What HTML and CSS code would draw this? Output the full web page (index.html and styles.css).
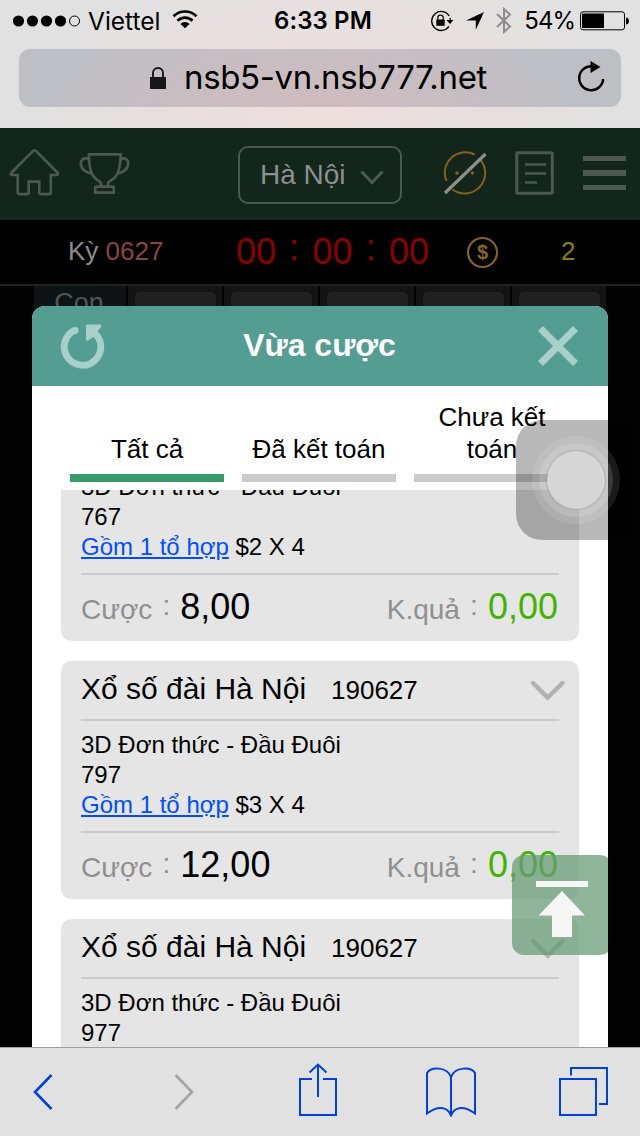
FILE: index.html
```html
<!DOCTYPE html>
<html lang="vi">
<head>
<meta charset="utf-8">
<title>Vừa cược</title>
<link rel="stylesheet" href="styles.css">
</head>
<body>
<div class="screen">
  <header class="chrome">
    <div class="status">
      <div class="status-left">
        <svg class="dots" width="68" height="12" viewBox="0 0 68 12"><circle cx="5.500" cy="6" r="5.600"/><circle cx="19.500" cy="6" r="5.600"/><circle cx="33.500" cy="6" r="5.600"/><circle cx="47.500" cy="6" r="5.600"/><circle cx="61.500" cy="6" r="5" fill="none" stroke="#000"/></svg>
        <span class="carrier">Viettel</span>
        <svg class="wifi" width="26" height="19" viewBox="0 0 26 19"><g fill="none" stroke="#000" stroke-width="2.700"><path d="M1.500 6.300a16.200 16.200 0 0 1 23 0"/><path d="M5.500 10.700a10.500 10.500 0 0 1 15 0"/></g><path d="M13 18.200l-4.600-4.300a6.400 6.400 0 0 1 9.200 0z"/></svg>
      </div>
      <span class="clock">6:33 PM</span>
      <div class="status-right">
        <svg width="24" height="22" viewBox="0 0 24 22"><path d="M19.300 6A9.500 9.500 0 1 0 19 16.400M20.200 8v3" fill="none" stroke="#000" stroke-width="1.300"/><path d="M16.500 10h7l-3.500 4z"/><path d="M6.300 9.500h8.400v6.300H6.300z"/><path d="M7.800 10V7.800a2.700 2.700 0 0 1 5.400 0V10" fill="none" stroke="#000" stroke-width="1.200"/></svg>
        <svg class="arrow" width="18" height="18" viewBox="0 0 18 18"><path d="M18 0L9.800 17.800V8.600H0z"/></svg>
        <svg class="bt" width="16" height="27" viewBox="0 0 16 27"><path d="M1 7l13 12.500-6 5.500V2l6 5.500L1 20" fill="none" stroke="#8d8d8d" stroke-width="2"/></svg>
        <span class="pct">54%</span>
        <svg width="49" height="20" viewBox="0 0 49 20"><rect x=".5" y=".8" width="44" height="18" rx="2.500" fill="none" stroke="#000"/><path d="M2 2.500h22v14.600H2zM46 6.500c4 0 4 7 0 7z"/></svg>
      </div>
    </div>
    <div class="address">
      <svg class="lock" width="16" height="23" viewBox="0 0 16 23"><path d="M0 10h16v12H0z" fill="#171717"/><path d="M3 11V6a5 5 0 0 1 10 0v5" fill="none" stroke="#171717" stroke-width="1.900"/></svg>
      <span class="url">nsb5-vn.nsb777.net</span>
      <svg class="reload" width="28" height="32" viewBox="0 0 28 32"><path d="M15 5.200A12 12 0 1 0 26.200 18" fill="none" stroke="#000" stroke-width="2.500"/><path d="M13.500 0l10 6-10 6z"/></svg>
    </div>
  </header>

  <main class="page">
    <nav class="nav">
      <svg class="home" width="50" height="50" viewBox="0 0 52 52"><path d="M9 28H3.500q-2.500-.4-1-2.300L25 3q1.500-1.300 3 0l22.500 22.700q1.500 1.900-1 2.300H43.500v18q0 2-2 2h-8q-2 0-2-2V35H20.500v11q0 2-2 2H11q-2 0-2-2z"/></svg>
      <svg class="cup" width="51" height="43" viewBox="0 0 52 44"><path d="M10 2.500h32.500c0 13-2 22-9 26q-4 2-4 4.500v2.500h-7V33q0-2.500-4-4.500c-6.500-4-8.500-13-8.500-26zM16.500 41.500V37q0-1.500 1.500-1.500h16q1.500 0 1.500 1.500v4.500zM10 7c-6-1.500-9 1-8 6.500 1 5 6 7.500 10 8.500M42 7c6-1.500 9 1 8 6.500-1 5-6 7.500-10 8.500"/></svg>
      <div class="select"><span>Hà Nội</span><svg width="24" height="15" viewBox="0 0 24 15"><path d="M1.500 1.500L12 12.500l10.500-11"/></svg></div>
      <svg class="face" width="44" height="46" viewBox="0 0 44 46"><g stroke="#8a6017" stroke-width="2"><path d="M3.500 31A20.500 20.500 0 0 1 31.500 4.500M37.500 10A20.500 20.500 0 0 1 9.500 39.500"/></g><g fill="#8a6017" stroke="none"><circle cx="14" cy="23" r="1.700"/><circle cx="29.500" cy="23" r="1.700"/></g><path d="M2 43L42.500 4" stroke="#8c8f8d" stroke-width="3.200"/></svg>
      <svg class="doc" width="40" height="44" viewBox="0 0 40 44"><rect x="1.800" y="1.800" width="35.500" height="40.500" rx="1" stroke-width="3"/><path d="M10 13.500h21M10 22.500h21M10 31.500h12"/></svg>
      <div class="burger"><i></i><i></i><i></i></div>
    </nav>
    <div class="draw">
      <div class="period">Kỳ <b>0627</b></div>
      <div class="timer">00<i>:</i>00<i>:</i>00</div>
      <div class="coin"><span>$</span></div>
      <div class="balance">2</div>
    </div>
    <div class="board">
      <div class="cell lead">Con</div>
      <div class="cell"><p></p></div><div class="cell"><p></p></div><div class="cell"><p></p></div><div class="cell"><p></p></div><div class="cell"><p></p></div>
    </div>

    <section class="modal">
      <div class="modal-head">
        <svg width="48" height="48" viewBox="0 0 48 48"><path d="M15 8.200A18.300 18.300 0 1 0 35 11.500" fill="none" stroke="#a9cfca" stroke-width="6.800"/><circle cx="15.200" cy="8.400" r="3.400" fill="#a9cfca"/><path d="M27 2.500h13q2.500.5.800 2.800L38 9l-3 5-6 4q-2.500 1.500-3-.5V3.500z" fill="#a9cfca"/></svg>
        <h1>Vừa cược</h1>
        <svg width="44" height="44" viewBox="0 0 44 44"><path d="M4.500 4.500l35 35M39.500 4.500l-35 35" stroke="#a9cfca" stroke-width="7"/></svg>
      </div>
      <div class="tabs">
        <div class="tab on">Tất cả</div>
        <div class="tab">Đã kết toán</div>
        <div class="tab">Chưa kết toán</div>
      </div>
      <div class="list">
        <article class="card">
          <div class="card-body">3D Đơn thức - Đầu Đuôi<br>767<br><a>Gồm 1 tổ hợp</a> $2 X 4</div>
          <div class="card-foot"><span class="lab">Cược<i>:</i></span><span class="val">8,00</span><span class="lab res">K.quả<i>:</i></span><span class="val win">0,00</span></div>
        </article>
        <article class="card">
          <div class="card-head"><span class="name">Xổ số đài Hà Nội</span><span class="num">190627</span><svg class="chev" width="34" height="20" viewBox="0 0 34 20"><path d="M2 2l14.700 14.500L31.500 2"/></svg></div>
          <div class="card-body">3D Đơn thức - Đầu Đuôi<br>797<br><a>Gồm 1 tổ hợp</a> $3 X 4</div>
          <div class="card-foot"><span class="lab">Cược<i>:</i></span><span class="val">12,00</span><span class="lab res">K.quả<i>:</i></span><span class="val win">0,00</span></div>
        </article>
        <article class="card">
          <div class="card-head"><span class="name">Xổ số đài Hà Nội</span><span class="num">190627</span><svg class="chev" width="34" height="20" viewBox="0 0 34 20"><path d="M2 2l14.700 14.500L31.500 2"/></svg></div>
          <div class="card-body">3D Đơn thức - Đầu Đuôi<br>977</div>
        </article>
      </div>
      <div class="totop"><svg width="56" height="60" viewBox="0 0 56 60"><path d="M2 2h52v6H2zM28 12L51 36.500H38V58H18V36.500H4.500z" fill="#f6f6f6"/></svg></div>
    </section>
  </main>

  <footer class="toolbar">
    <svg width="20" height="36" viewBox="0 0 20 36"><path d="M18.500 1L2 18l16.500 17" stroke="#0040dd" stroke-width="2.600"/></svg>
    <svg width="20" height="36" viewBox="0 0 20 36"><path d="M1.500 1L18 18 1.500 35" stroke="#a3a3a3" stroke-width="2.600"/></svg>
    <svg width="40" height="54" viewBox="0 0 40 54"><path d="M14 16H2v36h36V16H25M20 34V3M11.500 9.500L20 1.500l8.500 8" stroke="#0040dd" stroke-width="2"/></svg>
    <svg width="52" height="50" viewBox="0 0 52 50"><path d="M26 48V10C22-.5 6-.5 2 6v40.500c10-7.500 20-8 24 2 4-10 14-9.500 24-2V6C46-.5 30-.5 26 10" stroke="#0040dd" stroke-width="2"/></svg>
    <svg width="50" height="50" viewBox="0 0 50 50"><path d="M2 13h36v36H2zM13 9.500V2h36v36h-8" stroke="#0040dd" stroke-width="2"/></svg>
  </footer>

  <div class="assist"><div class="ring"></div></div>
</div>
</body>
</html>
```

FILE: styles.css
```css
* { box-sizing: border-box; margin: 0; padding: 0; }
body { background: #000; font-family: "Liberation Sans", Arial, sans-serif; }
i { font-style: normal; }
svg { display: block; flex: none; }
.screen { position: relative; width: 640px; height: 1136px; overflow: hidden; display: flex; flex-direction: column; }

/* browser chrome */
.chrome { height: 128px; background: radial-gradient(ellipse 300px 170px at 325px 115px, #f0dfdf 0%, #e9dfde 40%, #e1e1e1 100%); font-family: Inter, "Liberation Sans", sans-serif; color: #000; }
.status { height: 49px; padding: 0 11px 8px 13px; display: grid; grid-template-columns: 1fr auto 1fr; align-items: center; }
.status-left, .status-right { display: flex; align-items: center; }
.status-right { justify-content: flex-end; }
.carrier { margin-left: 7px; width: 73px; font-size: 24.5px; white-space: nowrap; }
.wifi { margin: -2px 0 0 11px; }
.clock { font-size: 24px; font-weight: 600; letter-spacing: .1px; padding-left: 4px; }
.arrow { margin-left: 12px; }
.bt { margin-left: 12px; }
.pct { margin: 0 5px 0 12px; font-size: 24px; letter-spacing: -1px; }
.address { height: 58px; margin: 0 19px; padding: 0 16px 2px 131px; border-radius: 11px; background: radial-gradient(ellipse 260px 110px at 290px 70px, #d1bbbf 0%, #cabdc1 45%, #bebfc4 100%); display: flex; align-items: center; }
.lock { margin-top: 3px; }
.url { margin-left: 18px; font-size: 33px; letter-spacing: -.35px; white-space: nowrap; }
.reload { margin-left: auto; }

/* dimmed page */
.page { position: relative; flex: 1; min-height: 0; background: #020202; }
.nav { height: 92px; border-bottom: 2px solid #1d2521; background: #12261c; display: flex; align-items: center; }
.nav svg { fill: none; stroke: #4c5852; stroke-width: 2.7; }
.nav .home { margin-left: 9px; }
.nav .cup { margin-left: 20px; }
.select { width: 164px; height: 58px; margin: 4px 0 0 108px; padding: 0 16px 0 20px; border: 2px solid #4c5852; border-radius: 10px; display: flex; align-items: center; justify-content: space-between; color: #8c908e; font-size: 28px; }
.select svg { stroke-width: 3; margin-top: 4px; }
.nav .face { margin-left: 41px; }
.nav .doc { margin-left: 28px; }
.burger { margin-left: 28px; width: 43px; display: grid; gap: 9px; }
.burger i { height: 5.5px; background: #4c5852; }
.draw { height: 66px; background: #000; border-bottom: 2px solid #222; display: flex; align-items: center; padding-left: 68px; color: #8c8c8c; }
.period { width: 168px; font-size: 26px; margin-top: -2px; }
.period b { font-weight: 400; color: #8a4544; }
.timer { width: 231px; font-size: 36px; color: #8c0000; white-space: nowrap; }
.timer i { display: inline-block; width: 36.5px; text-align: center; position: relative; top: -4px; }
.coin { width: 31px; height: 31px; border: 2px solid #8a6520; border-radius: 50%; color: #8a6520; display: grid; place-items: center; font: bold 20px/1 "Liberation Sans", sans-serif; }
.balance { margin: -2px 0 0 63px; font-size: 26px; color: #8c8000; }
.board { height: 30px; margin-left: 34px; width: 572px; overflow: hidden; display: grid; grid-template-columns: 92px repeat(5, 94px); gap: 2px; }
.cell { background: #141414; padding: 6px 6px 0 7px; }
.cell p { height: 40px; border-radius: 5px; background: #212121; }
.cell.lead { background: #0d1413; padding: 0 2px 0 0; text-align: center; font-size: 27px; line-height: 34px; color: #515554; }

/* modal */
.modal { position: absolute; left: 32px; top: 178px; width: 576px; bottom: 0; background: #fff; border-radius: 13px 13px 0 0; overflow: hidden; color: #000; }
.modal-head { height: 80px; padding: 0 28px 0 28px; background: #549d93; display: flex; align-items: center; justify-content: space-between; }
.modal-head h1 { font-size: 32px; color: #fff; line-height: 40px; margin: -2px 5px 0 0; }
.tabs { height: 104px; padding: 0 38px 8px; display: grid; grid-template-columns: 154px 154px 156px; gap: 18px; align-items: end; }
.tab { border-bottom: 8px solid #cbcbcb; padding-bottom: 9px; text-align: center; font-size: 26px; line-height: 32px; }
.tab.on { border-color: #389b69; }
.list { height: 558px; padding: 0 29px; overflow: hidden; }
.card { display: flow-root; height: 238px; margin-bottom: 20px; padding: 0 20px; border-radius: 10px; background: #e5e5e5; }
.card:first-child { height: 151px; border-radius: 0 0 10px 10px; }
.card:first-child .card-body { margin-top: -18px; }
.card-head { height: 60px; border-bottom: 2px solid #cbcbcb; display: flex; align-items: center; margin-bottom: 9px; }
.name { font-size: 30px; width: 250px; white-space: nowrap; margin-top: -2px; }
.num { font-size: 26px; }
.chev { margin: 2px -6px 0 auto; fill: none; stroke: #b2b2b2; stroke-width: 4.5; stroke-linecap: round; }
.card-body { height: 101px; font-size: 24px; line-height: 30px; }
.card-body a { color: #004eff; text-decoration: underline; }
.card-foot { border-top: 2px solid #cbcbcb; height: 60px; padding-top: 11px; display: flex; align-items: baseline; }
.lab { font-size: 28px; color: #909090; }
.lab i { display: inline-block; width: 28px; text-align: center; position: relative; top: -4px; }
.res { margin-left: auto; }
.val { font-size: 36px; line-height: 42px; }
.win { color: #41b400; margin-right: 1px; }
.totop { position: absolute; left: 480px; top: 549px; width: 100px; height: 100px; border-radius: 12px; background: rgba(103, 155, 116, .73); padding: 24px 0 0 22px; }

/* browser toolbar */
.toolbar { height: 89px; margin-top: -1px; position: relative; border-top: 1px solid #a0a0a0; background: #e1e1e1; padding: 0 32px 0 33px; display: flex; align-items: center; }
.toolbar svg { fill: none; }
.toolbar svg:nth-child(2) { margin-left: 121px; }
.toolbar svg:nth-child(3) { margin-left: 104px; margin-top: -4px; }
.toolbar svg:nth-child(4) { margin-left: 87px; }
.toolbar svg:nth-child(5) { margin-left: auto; margin-top: -2px; }

/* floating touch button */
.assist { position: absolute; left: 516px; top: 420px; width: 120px; height: 120px; border-radius: 26px; background: rgba(0, 0, 0, .28); display: grid; place-items: center; }
.ring { width: 58px; height: 58px; border-radius: 50%; background: #d6d6d6; box-shadow: 0 0 0 1px rgba(120,120,120,.3), 0 0 0 8px rgba(255,255,255,.14), 0 0 0 15px rgba(255,255,255,.1); }
```
